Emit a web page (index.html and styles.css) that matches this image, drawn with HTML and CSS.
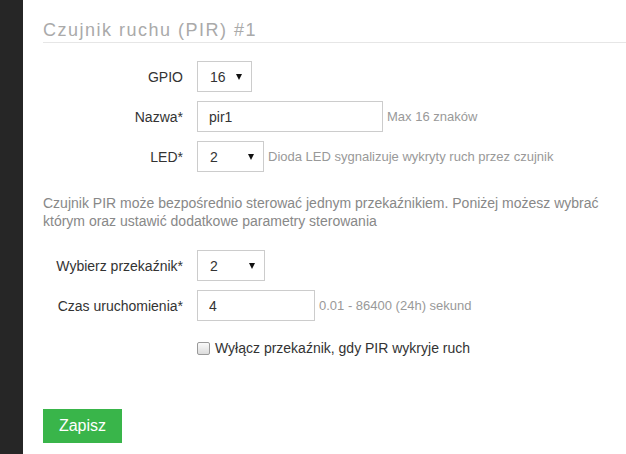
FILE: index.html
```html
<!DOCTYPE html>
<html lang="pl">
<head>
    <meta charset="UTF-8">
    <meta name="viewport" content="width=device-width, initial-scale=1.0">
    <title>Czujnik ruchu (PIR) #1</title>
    <link rel="stylesheet" href="styles.css">
</head>

<body>
    <div class="layout">
        <div class="sidebar"></div>
        <div class="main-content">
            <h2 class="section-title">Czujnik ruchu (PIR) #1</h2>

            <form class="settings-form">
                <div class="form-rows">
                    <label class="row-label" for="gpio">GPIO</label>
                    <div class="row-control">
                        <span class="select-wrap w-55">
                            <select id="gpio">
                                <option>16</option>
                            </select>
                        </span>
                    </div>

                    <label class="row-label" for="name">Nazwa*</label>
                    <div class="row-control">
                        <input type="text" id="name" class="text-input w-186" value="pir1">
                        <span class="help">Max 16 znaków</span>
                    </div>

                    <label class="row-label" for="led">LED*</label>
                    <div class="row-control">
                        <span class="select-wrap w-67">
                            <select id="led">
                                <option>2</option>
                            </select>
                        </span>
                        <span class="help">Dioda LED sygnalizuje wykryty ruch przez czujnik</span>
                    </div>
                </div>

                <p class="note">Czujnik PIR może bezpośrednio sterować jednym przekaźnikiem. Poniżej możesz wybrać którym oraz ustawić dodatkowe parametry sterowania</p>

                <div class="form-rows">
                    <label class="row-label" for="relay">Wybierz przekaźnik*</label>
                    <div class="row-control">
                        <span class="select-wrap w-68">
                            <select id="relay">
                                <option>2</option>
                            </select>
                        </span>
                    </div>

                    <label class="row-label" for="time">Czas uruchomienia*</label>
                    <div class="row-control">
                        <input type="text" id="time" class="text-input w-118" value="4">
                        <span class="help">0.01 - 86400 (24h) sekund</span>
                    </div>

                    <div></div>
                    <label class="check-row">
                        <input type="checkbox" class="check">
                        <span>Wyłącz przekaźnik, gdy PIR wykryje ruch</span>
                    </label>
                </div>

                <div class="actions">
                    <button type="button" class="btn-save">Zapisz</button>
                </div>
            </form>
        </div>
    </div>
</body>

</html>
```

FILE: styles.css
```css
/* Presets */
html,
body {
    margin: 0;
    font-size: 14px;
    font-family: 'Liberation Sans', Arial, sans-serif;
    color: #333;
    background: #fff;
}

.layout {
    display: flex;
    min-height: 100vh;
}

.sidebar {
    width: 23px;
    flex: none;
    background-color: #262626;
}

.main-content {
    flex: 1;
    padding: 20px 0 0 20px;
}


/* Heading */
.section-title {
    margin: 0;
    padding-bottom: 2px;
    font-size: 18px;
    line-height: 20px;
    font-weight: normal;
    letter-spacing: 1.5px;
    color: #aaa;
    border-bottom: 1px solid #e6e6e6;
}


/* Form rows */
.form-rows {
    display: grid;
    grid-template-columns: 140px auto;
    column-gap: 14px;
    row-gap: 9px;
    align-items: center;
}

.settings-form > .form-rows:first-child {
    margin-top: 18px;
}

.row-label {
    text-align: right;
    line-height: 20px;
}

.row-control {
    display: flex;
    align-items: center;
    gap: 4px;
}

.help {
    font-size: 13px;
    color: #999;
}

.text-input,
.select-wrap select {
    box-sizing: border-box;
    height: 31px;
    margin: 0;
    border: 1px solid #ccc;
    border-radius: 0;
    background: #fff;
    font: inherit;
    color: #333;
    outline: none;
}

.text-input {
    padding: 0 11px;
}

.select-wrap {
    position: relative;
    display: inline-block;
}

.select-wrap select {
    width: 100%;
    padding: 0 12px;
    appearance: none;
    -webkit-appearance: none;
}

.select-wrap::after {
    content: '';
    position: absolute;
    right: 10px;
    top: 13px;
    border-left: 3.5px solid transparent;
    border-right: 3.5px solid transparent;
    border-top: 6px solid #111;
    pointer-events: none;
}

.w-55 { width: 55px; }
.w-67 { width: 67px; }
.w-68 { width: 68px; }
.w-118 { width: 118px; }
.w-186 { width: 186px; }

.note {
    margin: 22px 0 20px;
    line-height: 18px;
    color: #888;
}

.check-row {
    display: flex;
    align-items: center;
    gap: 5px;
    margin-top: 8px;
    line-height: 20px;
}

.check {
    appearance: none;
    -webkit-appearance: none;
    box-sizing: border-box;
    width: 13px;
    height: 13px;
    margin: 0;
    border: 1px solid #9a9a9a;
    border-radius: 2px;
    background: linear-gradient(#fafafa, #dcdcdc);
}


/* Actions */
.actions {
    margin-top: 51px;
}

.btn-save {
    width: 79px;
    height: 34px;
    padding: 0;
    border: none;
    border-radius: 0;
    background-color: #39b54a;
    color: #fff;
    font-family: inherit;
    font-size: 16px;
    cursor: pointer;
}
```
